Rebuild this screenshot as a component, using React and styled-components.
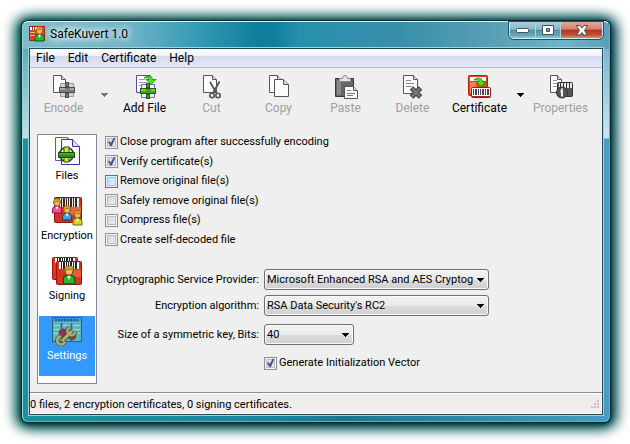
import React, { useId } from "react";
import styled, { createGlobalStyle, css } from "styled-components";

const GlobalStyle = createGlobalStyle`
  * { box-sizing: border-box; }
  body { margin: 0; background: #fff; }
  button, select, input { font: inherit; color: inherit; margin: 0; }
`;

const uiFont = `Roboto, "Open Sans", sans-serif`;

const Desktop = styled.div`
  min-height: 100vh;
  padding: 21px 20px 22px 22px;
  display: flex;
  overflow: hidden;
  font: 12px/16px ${uiFont};
  color: #000;
`;

const Window = styled.main`
  flex: 1;
  min-width: 0;
  display: flex;
  flex-direction: column;
  padding: 0 6px 6px;
  border: 1px solid;
  border-color: #dff6fa #2cc4e8 #2cc4e8 #9fd4dc;
  border-radius: 6px;
  background:
    linear-gradient(90deg, #7dbccb 0, #6fb4c8 18%, #3399b5 30%, #107d9d 40%, #117e9e 43%, #268fae 47%, #3a8fab 65%, #5ba2b8 82%, #70b4c8 92%, #5b9fba 100%) top / 100% 27px no-repeat,
    linear-gradient(180deg, #ffffff44 27px, #ffffffbb 116px, transparent 117px),
    linear-gradient(90deg, #1f8f98, #1f86a0 40%, #1f7590 55%, #4a9cc0);
  box-shadow:
    0 0 0 1px #06282e,
    0 1px 5px 1px #03262c,
    -3px 1px 13px 4px #0b665e,
    3px 1px 13px 4px #0b4a5a;
`;

const TitleBar = styled.header`
  display: flex;
  align-items: flex-start;
  height: 26px;
`;

const Caption = styled.h1`
  flex: 1;
  display: flex;
  align-items: center;
  gap: 5px;
  height: 24px;
  margin: 0;
  font-size: 12px;
  font-weight: 400;
  text-shadow: 0 0 6px #fff, 0 0 8px #fff, 0 0 12px #fff;
`;

const CaptionButtons = styled.div`
  display: flex;
  height: 17px;
  border: 1px solid #c8eef4;
  border-top: 0;
  border-radius: 0 0 5px 5px;
  box-shadow: 0 0 0 1px #1d5264;
  overflow: hidden;
`;

const CaptionButton = styled.button`
  width: ${(p) => (p.$close ? 42 : 25)}px;
  padding: 0;
  border: 0;
  border-left: ${(p) => (p.$first ? "0" : "1px solid #a9d6e0")};
  display: grid;
  place-items: center;
  background: ${(p) =>
    p.$close
      ? "linear-gradient(#e0a89c, #cf8070 45%, #b03420 50%, #c05038 80%, #e09070)"
      : "linear-gradient(#a8d0da, #86b8c6 45%, #5291a5 50%, #68a8ba 85%, #8accd8)"};
`;

const Client = styled.div`
  flex: 1;
  display: flex;
  flex-direction: column;
  background: #efefef;
  border: 1px solid #1b4a5c;
  border-width: 1px 0;
  box-shadow: 0 0 0 1px #a4d3de, inset 1px 0 #21485c, inset -1px 0 #21485c;
`;

const MenuBar = styled.nav`
  display: flex;
  gap: 13px;
  margin: 0 1px;
  padding: 0 6px;
  height: 19px;
  border-bottom: 1px solid #b6bcd6;
  background: linear-gradient(#fff, #eef1fa 40%, #d4daee 41%, #e3e8f7);
`;

const MenuItem = styled.button`
  padding: 0;
  border: 0;
  background: none;
  line-height: 18px;
`;

const ToolBar = styled.div`
  display: flex;
  padding: 7px 1px 0;
`;

const ToolButton = styled.button`
  width: 67px;
  padding: 0;
  border: 0;
  background: none;
  display: flex;
  flex-direction: column;
  align-items: center;
  gap: 1px;
  white-space: nowrap;
  &:disabled { color: #a0a0a0; }
`;

const DropButton = styled.button`
  width: 14px;
  height: 40px;
  padding: 0;
  border: 0;
  background: none;
  display: grid;
  place-items: center;
  color: ${(p) => (p.disabled ? "#777" : "#000")};
`;

const Content = styled.div`
  flex: 1;
  display: flex;
  gap: 8px;
  padding: 18px 8px 8px;
`;

const SideList = styled.div`
  width: 60px;
  padding: 1px;
  border: 1px solid #828790;
  background: #fff;
`;

const SideItem = styled.button`
  display: flex;
  flex-direction: column;
  align-items: center;
  gap: 2px;
  width: 100%;
  height: 60px;
  padding: 0;
  border: 0;
  background: ${(p) => (p.$active ? "#3399ff" : "none")};
  color: ${(p) => (p.$active ? "#fff" : "#000")};
  font-size: 11px;
`;

const Panel = styled.form`
  flex: 1;
  font: 11px/16px ${uiFont};
`;

const Options = styled.div`
  display: grid;
  grid-template-rows: repeat(6, 1fr);
  align-items: start;
  height: 117px;
  margin-bottom: 18px;
`;

const CheckLabel = styled.label`
  display: flex;
  align-items: center;
  gap: 2px;
`;

const hot = css`
  border-color: #3c7fb1;
  background: linear-gradient(135deg, #b4e0fa, #e4f5fd) padding-box;
  box-shadow: inset 0 0 0 1px #def4fd, inset 0 0 0 2px #8fd0f0;
`;

const Check = styled.input.attrs({ type: "checkbox" })`
  appearance: none;
  flex: none;
  width: 13px;
  height: 13px;
  border: 1px solid #8e8f8f;
  background: linear-gradient(135deg, #cdd0d5, #f4f4f5);
  box-shadow: inset 0 0 0 1px #f4f4f4, inset 0 0 0 2px #b9bdc3;
  ${(p) => p.$hot && hot}
  &:checked::after {
    content: "";
    display: block;
    width: 11px;
    height: 11px;
    background: #42568f;
    clip-path: polygon(18% 50%, 30% 42%, 43% 60%, 70% 12%, 86% 12%, 54% 86%, 38% 86%);
  }
`;

const Fields = styled.div`
  display: grid;
  grid-template-columns: 154px auto;
  justify-content: start;
  align-items: center;
  gap: 5px;
`;

const FieldLabel = styled.label`
  text-align: right;
  white-space: nowrap;
`;

const SelectBox = styled.span`
  position: relative;
  display: flex;
  width: ${(p) => p.$width}px;
`;

const Select = styled.select`
  appearance: none;
  width: 100%;
  height: 21px;
  padding: 0 14px 0 2px;
  border: 1px solid #707070;
  border-radius: 3px;
  background: linear-gradient(#f2f2f2, #ebebeb 50%, #dddddd 51%, #cfcfcf);
  box-shadow: inset 0 0 0 1px #fafafa;
`;

const SelectArrow = styled.svg`
  position: absolute;
  right: 5px;
  top: 9px;
  pointer-events: none;
`;

const Gap = styled.div`
  height: ${(p) => p.$h}px;
`;

const StatusBar = styled.footer`
  display: flex;
  align-items: center;
  justify-content: space-between;
  height: 22px;
  margin: 0 1px;
  padding: 2px 2px 0 0;
  border-top: 1px solid #8c8c8c;
  background: #f1edec;
  box-shadow: inset 0 1px #fff, inset -1px -1px #fff;
  font: 11px/16px ${uiFont};
`;

/* ---------- drawings ---------- */

const Down = () => <path d="M0 0h7v1h-1v1h-1v1h-1v1h-1v-1h-1v-1h-1v-1h-1z" fill="currentColor" />;

const Sheet = ({ x, y, w, h, fold = 4, stroke = "#555", fill = "#fcfcfc" }) => (
  <g stroke={stroke} fill={fill}>
    <path d={`M${x} ${y}h${w - fold}l${fold} ${fold}v${h - fold}h${-w}z`} />
    <path d={`M${x + w - fold} ${y}v${fold}h${fold}`} fill="#ddd" />
  </g>
);

const Parcel = ({ x, y, gray }) => {
  const dark = gray ? "#4a4a4a" : "#1d5c0c";
  const mid = gray ? "#7c7c7c" : "#48a01c";
  const lite = gray ? "#a8a8a8" : "#86cc3c";
  return (
    <g transform={`translate(${x} ${y})`}>
      <path d="M1.500 1.500h13v13h-13z" fill={gray ? "#d4d4d4" : "#f0eeff"} stroke={gray ? "#999" : "#7a62c4"} />
      <path d="M6 0h4v16h-4z" fill={dark} />
      <path d="M7 1h2v3h-2zM7 12h2v3h-2z" fill={mid} />
      <path d="M0 5h16v6h-16z" fill={dark} />
      <path d="M1 6h14v4h-14z" fill={mid} />
      <path d="M1 6h5v2h-5zM11 6h4v2h-4z" fill={lite} />
    </g>
  );
};

const GreenArrow = ({ x, y }) => (
  <path transform={`translate(${x} ${y})`} d="M0 2C3-1 8-.5 8.500 3.500H12L7 8.500 2 3.500H5C5 2 3 1.500 0 2z" fill="#4be316" stroke="#15830a" strokeWidth=".8" />
);

const Bars = ({ x, y, h, color = "#222" }) => (
  <path transform={`translate(${x} ${y})`} fill={color} d={`M0 0h1v${h}h-1zM2 0h2v${h}h-2zM5 0h1v${h}h-1zM7 0h1v${h}h-1zM9 0h2v${h}h-2zM12 0h1v${h}h-1zM14 0h2v${h}h-2z`} />
);

const Person = ({ x, y, color, edge, s = 1 }) => (
  <g transform={`translate(${x} ${y}) scale(${s})`}>
    <path d="M-4.500 15v-3.500q0-3 3-3h3q3 0 3 3V15z" fill={color} stroke={edge} />
    <path d="M-1.500 8.500L0 12l1.500-3.500z" fill="#fff" />
    <circle cx="0" cy="5" r="3.200" fill="#f7b763" stroke="#7b4210" strokeWidth=".8" />
    <path d="M-3.500 5C-4 1-1 .5 0 .8 2 .2 4 2 3.500 5 2 3-1 3-3.500 5z" fill="#d9a420" stroke="#7b5a10" strokeWidth=".6" />
  </g>
);

const EncodeIcon = () => (
  <svg width="24" height="24" viewBox="0 0 24 24">
    <Sheet x={1.5} y={0.5} w={12} h={17} />
    <Parcel x={7} y={7} gray />
  </svg>
);

const AddFileIcon = () => (
  <svg width="24" height="24" viewBox="0 0 24 24">
    <path d="M3.500.500h14v17h-14z" fill="#fff" stroke="#5848b0" />
    <path d="M6 4.500h6M6 7.500h8M6 10.500h5" stroke="#9c94d8" />
    <Parcel x={7} y={8} />
    <GreenArrow x={11} y={1} />
  </svg>
);

const CutIcon = () => (
  <svg width="24" height="24" viewBox="0 0 24 24">
    <Sheet x={3.5} y={0.5} w={13} h={17} />
    <path d="M10 7l6.500 11M19.500 6.500L13 18" stroke="#555" strokeWidth="1.800" fill="none" />
    <g fill="#eee" stroke="#555" strokeWidth="1.600"><circle cx="12" cy="20.500" r="2.200" /><circle cx="18" cy="20.500" r="2.200" /></g>
  </svg>
);

const CopyIcon = () => (
  <svg width="24" height="24" viewBox="0 0 24 24">
    <Sheet x={2.5} y={0.5} w={12} h={17} />
    <Sheet x={7.5} y={4.5} w={14} h={17} fold={5} />
  </svg>
);

const PasteIcon = () => (
  <svg width="24" height="24" viewBox="0 0 24 24">
    <path d="M1.500 3.500h18v18h-18z" fill="#666" stroke="#383838" />
    <path d="M3 5h4v15h-4z" fill="#888" />
    <path d="M5.500 6.500v-3h3q0-3 2.500-3t2.500 3h3v3z" fill="#e4e4e4" stroke="#888" />
    <Sheet x={10.5} y={11.5} w={13} h={12} />
    <path d="M13 15.500h4M13 18.500h8M13 20.500h6" stroke="#777" />
  </svg>
);

const DeleteIcon = () => (
  <svg width="24" height="24" viewBox="0 0 24 24">
    <Sheet x={2.5} y={0.5} w={14} h={18} />
    <path d="M5 5.500h5M5 8.500h8M5 11.500h6" stroke="#888" />
    <path d="M10.500 13l9 9M19.500 13l-9 9" stroke="#3c3c3c" strokeWidth="5" />
    <path d="M11 13.500l8 8M19 13.500l-8 8" stroke="#777" strokeWidth="2.600" />
  </svg>
);

const CertificateIcon = () => (
  <svg width="24" height="24" viewBox="0 0 24 24">
    <rect x=".5" y=".5" width="19" height="20" rx="1" fill="#e0481c" stroke="#b32210" />
    <path d="M2 2h16v4h-16z" fill="#fff" />
    <path d="M2 7h6v11h-6z" fill="#f08050" />
    <GreenArrow x={6} y={3} />
    <rect x="3.500" y="12.500" width="19" height="10" rx="1" fill="#fff" stroke="#a01818" />
    <Bars x={5} y={14} h={6} color="#55405c" />
    <path d="M4 21h18v1h-18z" fill="#b02020" />
  </svg>
);

const PropertiesIcon = () => (
  <svg width="24" height="24" viewBox="0 0 24 24">
    <Sheet x={1.5} y={0.5} w={11} h={17} />
    <path d="M4 5.500h4M4 8.500h6M4 11.500h5" stroke="#999" />
    <rect x="8.500" y="7.500" width="15" height="14" rx="1" fill="#555" stroke="#333" />
    <path d="M10 8h13v5h-13z" fill="#e8e8e8" />
    <path d="M11.500 8v5M14.500 8v5M17.500 8v5M20.500 8v5" stroke="#333" />
    <circle cx="13" cy="17.500" r="5.500" fill="#555" stroke="#333" />
    <path d="M13 13.500v2M13 16.500v5M11.500 16.500h2" stroke="#fff" strokeWidth="1.800" />
  </svg>
);

const FilesIcon = () => (
  <svg width="30" height="30" viewBox="0 0 30 30">
    <Sheet x={3.5} y={1.5} w={16} h={23} stroke="#6054b0" />
    <Sheet x={9.500} y={3.500} w={18} h={25} fold={7} stroke="#40309a" />
    <circle cx="14.500" cy="18.500" r="7" fill="#ece8dc" stroke="#332e24" strokeWidth="1.600" />
    <path d="M12 11h5v15h-5z" fill="#dce034" stroke="#2d5b10" />
    <path d="M6.500 16.500h16v5h-16z" fill="#2f8a1c" stroke="#124d08" />
    <path d="M7 18h15" stroke="#5cc036" />
  </svg>
);

const EncryptionIcon = () => (
  <svg width="32" height="30" viewBox="0 0 32 30">
    <rect x="3.500" y="1.500" width="27" height="25" rx="1" fill="#d8301c" stroke="#8e1212" />
    <path d="M9 2h19v9h-19z" fill="#f8e8e4" />
    <path d="M16 11h14v8h-14z" fill="#e8684c" />
    <Bars x={10} y={2} h={9} color="#3c2424" />
    <Person x={6} y={2} color="#ff4f9a" edge="#8a1450" />
    <Person x={16} y={9} color="#36a4e0" edge="#11406e" />
    <Person x={26.500} y={14} color="#d8d420" edge="#6e6408" />
  </svg>
);

const SigningIcon = () => (
  <svg width="30" height="30" viewBox="0 0 30 30">
    <rect x=".5" y="1.500" width="25" height="22" rx="1" fill="#d63a22" stroke="#a01414" />
    <path d="M3 2h20v5h-20z" fill="#fff" /><Bars x={5} y={2} h={4} />
    <rect x="4.500" y="5.500" width="25" height="23" rx="1" fill="#d8341c" stroke="#9c1010" />
    <path d="M7 6h20v7h-20z" fill="#fff" /><Bars x={9} y={6} h={7} />
    <path d="M20 14h9v7h-9z" fill="#ea5c3c" />
    <Person x={17} y={9} s={1.25} color="#2cb432" edge="#0b5c10" />
  </svg>
);

const SettingsIcon = () => (
  <svg width="30" height="30" viewBox="0 0 30 30">
    <path d="M.500 1.500h29v24h-29z" fill="#62b4bc" stroke="#1c6b74" />
    <path d="M1 2h28v4h-28z" fill="#4898d8" />
    <path d="M3 4h23" stroke="#185a9c" strokeWidth="2" strokeDasharray="2 1" />
    <path d="M9.500 7v18M19.500 7v18" stroke="#1c7a7c" strokeWidth="1.500" />
    <path d="M2 9.500h6M2 13.500h6M2 17.500h6M21 9.500h7M21 13.500h7M21 17.500h7M11 9.500h7" stroke="#98dcd4" />
    <circle cx="11" cy="17" r="4.500" fill="#8c3458" /><circle cx="20" cy="20" r="4" fill="#8c3458" />
    <path d="M10 25L20 15" stroke="#4c5440" strokeWidth="5" />
    <path d="M9 20.500a4 4 0 1 0 4 5M18 11.500a4 4 0 1 0 5.500 4" fill="none" stroke="#4c5440" strokeWidth="4" />
    <path d="M10 25L20 15" stroke="#acac70" strokeWidth="3" />
    <path d="M9 20.500a4 4 0 1 0 4 5M18 11.500a4 4 0 1 0 5.500 4" fill="none" stroke="#acac70" strokeWidth="2.400" />
  </svg>
);

const AppIcon = () => (
  <svg width="16" height="16" viewBox="0 0 16 16">
    <path d="M.500.500h15v14h-15z" fill="#e8401c" stroke="#b01808" />
    <path d="M1 1h9v3h-9z" fill="#fff" /><path d="M3 1h1v3h-1zM5 1h1v3h-1z" fill="#555" />
    <path d="M1 6.500h5M1 9.500h5" stroke="#ffb090" />
    <Person x={10.500} y={0} color="#2cb432" edge="#0b5c10" />
  </svg>
);

const SizeGrip = () => (
  <svg width="10" height="10" viewBox="0 0 10 10">
    <path d="M7 0h2v2h-2zM7 3h2v2h-2zM7 6h2v2h-2zM4 3h2v2h-2zM4 6h2v2h-2zM1 6h2v2h-2z" fill="#c4c0c0" />
  </svg>
);

/* ---------- parts ---------- */

const tools = [
  { name: "Encode", Icon: EncodeIcon, disabled: true, drop: true },
  { name: "Add File", Icon: AddFileIcon },
  { name: "Cut", Icon: CutIcon, disabled: true },
  { name: "Copy", Icon: CopyIcon, disabled: true },
  { name: "Paste", Icon: PasteIcon, disabled: true },
  { name: "Delete", Icon: DeleteIcon, disabled: true },
  { name: "Certificate", Icon: CertificateIcon, drop: true },
  { name: "Properties", Icon: PropertiesIcon, disabled: true },
];

const pages = [
  { name: "Files", Icon: FilesIcon },
  { name: "Encryption", Icon: EncryptionIcon },
  { name: "Signing", Icon: SigningIcon },
  { name: "Settings", Icon: SettingsIcon, active: true },
];

const options = [
  { text: "Close program after successfully encoding", on: true },
  { text: "Verify certificate(s)", on: true },
  { text: "Remove original file(s)", hot: true },
  { text: "Safely remove original file(s)" },
  { text: "Compress file(s)" },
  { text: "Create self-decoded file" },
];

function Option({ text, on, hot: isHot }) {
  const id = useId();
  return (
    <CheckLabel htmlFor={id}>
      <Check id={id} defaultChecked={on} $hot={isHot} />
      {text}
    </CheckLabel>
  );
}

function SelectField({ label, value, width }) {
  const id = useId();
  return (
    <>
      <FieldLabel htmlFor={id}>{label}</FieldLabel>
      <SelectBox $width={width}>
        <Select id={id}><option>{value}</option></Select>
        <SelectArrow width="7" height="4"><Down /></SelectArrow>
      </SelectBox>
    </>
  );
}

export default function App() {
  return (
    <Desktop>
      <GlobalStyle />
      <Window>
        <TitleBar>
          <Caption><AppIcon />SafeKuvert 1.0</Caption>
          <CaptionButtons>
            <CaptionButton $first aria-label="Minimize">
              <svg width="13" height="7"><rect x=".5" y="1.500" width="12" height="4" rx="1" fill="#fff" stroke="#45525c" /></svg>
            </CaptionButton>
            <CaptionButton aria-label="Maximize">
              <svg width="12" height="10"><path d="M.500.500h11v9h-11zM4.500 3.500v3h3v-3z" fill="#fff" fillRule="evenodd" stroke="#45525c" /></svg>
            </CaptionButton>
            <CaptionButton $close aria-label="Close">
              <svg width="12" height="11"><path d="M.500.500h3.500l2 2.500 2-2.500h3.500l-3 5 3 4.500h-3.500l-2-2.500-2 2.500h-3.500l3-4.500z" fill="#fff" stroke="#5a4450" /></svg>
            </CaptionButton>
          </CaptionButtons>
        </TitleBar>
        <Client>
          <MenuBar>
            {["File", "Edit", "Certificate", "Help"].map((m) => <MenuItem key={m}>{m}</MenuItem>)}
          </MenuBar>
          <ToolBar>
            {tools.map(({ name, Icon, disabled, drop }) => (
              <React.Fragment key={name}>
                <ToolButton disabled={disabled}><Icon />{name}</ToolButton>
                {drop && (
                  <DropButton disabled={disabled} aria-label={`${name} options`}>
                    <svg width="7" height="4"><Down /></svg>
                  </DropButton>
                )}
              </React.Fragment>
            ))}
          </ToolBar>
          <Content>
            <SideList>
              {pages.map(({ name, Icon, active }) => (
                <SideItem key={name} $active={active}><Icon />{name}</SideItem>
              ))}
            </SideList>
            <Panel>
              <Options>
                {options.map((o) => <Option key={o.text} {...o} />)}
              </Options>
              <Fields>
                <SelectField label="Cryptographic Service Provider:" value="Microsoft Enhanced RSA and AES Cryptog" width={225} />
                <SelectField label="Encryption algorithm:" value="RSA Data Security's RC2" width={225} />
              </Fields>
              <Gap $h={8} />
              <Fields>
                <SelectField label="Size of a symmetric key, Bits:" value="40" width={90} />
              </Fields>
              <Gap $h={10} />
              <Fields>
                <span />
                <Option text="Generate Initialization Vector" on />
              </Fields>
            </Panel>
          </Content>
          <StatusBar>
            0 files, 2 encryption certificates, 0 signing certificates.
            <SizeGrip />
          </StatusBar>
        </Client>
      </Window>
    </Desktop>
  );
}
